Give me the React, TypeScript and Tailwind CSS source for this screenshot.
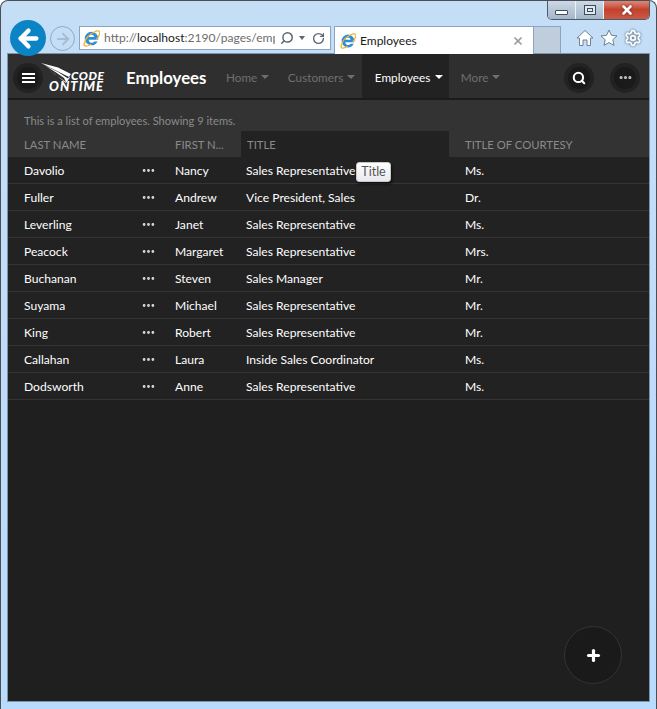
import { ArrowLeft, ArrowRight, Settings, RotateCw, Search, X, Plus, Ellipsis } from "lucide-react";

const font = { fontFamily: 'Lato, "Open Sans", sans-serif' };

const employees = [
  ["Davolio", "Nancy", "Sales Representative", "Ms."],
  ["Fuller", "Andrew", "Vice President, Sales", "Dr."],
  ["Leverling", "Janet", "Sales Representative", "Ms."],
  ["Peacock", "Margaret", "Sales Representative", "Mrs."],
  ["Buchanan", "Steven", "Sales Manager", "Mr."],
  ["Suyama", "Michael", "Sales Representative", "Mr."],
  ["King", "Robert", "Sales Representative", "Mr."],
  ["Callahan", "Laura", "Inside Sales Coordinator", "Ms."],
  ["Dodsworth", "Anne", "Sales Representative", "Ms."],
];

function IeLogo({ size }: { size: number }) {
  return (
    <svg width={size} height={size} viewBox="0 0 20 20" className="shrink-0">
      <path d="M10 2a8 8 0 0 0 0 16c3.400 0 6-1.800 7.200-4.600h-4a3.600 3.600 0 0 1-6.600-1.900h11.200c.1-.5.2-1 .2-1.500A8 8 0 0 0 10 2zM6.700 8.300a3.400 3.400 0 0 1 6.600 0z" fill="#2f8fd6" fillRule="evenodd" />
      <path d="M2 15C-.5 19.500 4 20 9 17M13 2.600c4-2.400 7.600-2.400 6.400 2.400-.6 2.400-2 4.400-3.400 6" fill="none" stroke="#f2b632" strokeWidth="1.500" strokeLinecap="round" />
      <path d="M1.500 16C2.500 11 6 6 13 2.600" fill="none" stroke="#f2b632" strokeWidth="1.500" strokeLinecap="round" />
    </svg>
  );
}

function Logo() {
  return (
    <svg width="64" height="30" viewBox="0 0 64 30" className="shrink-0">
      <path d="M0 0L17 4.500L30 11L27 15.500L17 9L4 2.500L15 9.500L23 15L25 19L14 11.500L8 6.500L20 16L25 20L29 14.500Z" fill="#fff" />
      <text x="30" y="17" fill="#fff" fontSize="12" fontWeight="900" fontStyle="italic" fontFamily="Lato, sans-serif" textLength="33">CODE</text>
      <text x="8" y="28" fill="#fff" fontSize="13" fontWeight="900" fontStyle="italic" fontFamily="Lato, sans-serif" textLength="54">ONTIME</text>
    </svg>
  );
}

function BrowserHome() {
  return (
    <svg width="18" height="18" viewBox="0 0 18 18" className="shrink-0">
      <path d="M9 1.500L17 9h-2.500v7.500H11V11H7v5.500H3.500V9H1z" fill="#fff" stroke="#6f8296" strokeWidth="1" strokeLinejoin="round" />
    </svg>
  );
}

function BrowserStar() {
  return (
    <svg width="18" height="18" viewBox="0 0 18 18" className="shrink-0">
      <path d="M9 1l2.400 5.300 5.600.6-4.200 3.800 1.200 5.700L9 13.500l-5 2.900 1.200-5.700L1 6.900l5.600-.6z" fill="#fff" stroke="#6f8296" strokeWidth="1" strokeLinejoin="round" />
    </svg>
  );
}

function NavItem({ label, active }: { label: string; active?: boolean }) {
  return (
    <div className={`flex h-full items-center pt-[4px] text-[11.750px] ${active ? "w-[87px] gap-[5px] bg-[#222222] pl-[13px] text-white" : "gap-[4px] pl-[12px] pr-[6.500px] text-[#6f6f6f]"}`}>
      {label}
      <span className={`mt-[-3px] h-0 w-0 border-x-[4px] border-t-[4px] border-x-transparent ${active ? "border-t-white" : "border-t-[#6f6f6f]"}`} />
    </div>
  );
}

function RoundButton({ children }: { children: React.ReactNode }) {
  return (
    <div className="flex h-[30px] w-[30px] items-center justify-center rounded-full bg-[#222222]">
      <div className="flex h-[22px] w-[22px] items-center justify-center rounded-full bg-[#1a1a1a]">{children}</div>
    </div>
  );
}

export default function App() {
  return (
    <div
      style={font}
      className="relative flex h-[709px] w-[657px] flex-col overflow-hidden rounded-t-[8px] border border-b-0 border-[#4a4f55] bg-gradient-to-b from-[#c4def6] to-[#b9dbfd] px-[7px]"
    >
      {/* Browser chrome */}
      <div className="relative h-[53px] shrink-0">
        <div className="absolute right-[-1px] top-[-1px] flex h-[20px] w-[103px] overflow-hidden rounded-b-[5px] border border-t-0 border-[#4d5a68]">
          <div className="flex w-[28px] items-center justify-center border-r border-[#eef3f8] bg-gradient-to-b from-[#cfdbe7] to-[#a3b6c9]">
            <div className="mt-[5px] h-[5px] w-[13px] rounded-[1px] border border-[#3d4d5e] bg-white" />
          </div>
          <div className="flex w-[28px] items-center justify-center border-r border-[#eef3f8] bg-gradient-to-b from-[#cfdbe7] to-[#a3b6c9]">
            <div className="flex h-[10px] w-[12px] items-center justify-center border border-[#3d4d5e] bg-[#dfe7ef]">
              <div className="h-[4px] w-[6px] border border-[#3d4d5e]" />
            </div>
          </div>
          <div className="flex flex-1 items-center justify-center bg-gradient-to-b from-[#dc9083] via-[#c4412d] to-[#c95a45]">
            <X size={14} strokeWidth={4.500} className="text-white drop-shadow-[0_0_1px_#5a1a10]" />
          </div>
        </div>

        <div className="flex items-start pt-[19px]">
          <div className="z-10 ml-[2px] flex h-[36px] w-[36px] shrink-0 items-center justify-center rounded-full bg-[#0a84c4]">
            <ArrowLeft size={27} strokeWidth={3.800} className="text-white" />
          </div>
          <div className="ml-[4px] mt-[6px] flex h-[25px] w-[25px] shrink-0 items-center justify-center rounded-full border border-[#8fa9c2]">
            <ArrowRight size={18} strokeWidth={2.500} className="text-[#a9bccf]" />
          </div>
          <div className="ml-[4px] mt-[6px] flex h-[24px] w-[252px] shrink-0 items-center border border-[#8ba5bf] bg-white pl-[3px] text-[12.100px] text-[#6d6d6d]">
            <IeLogo size={17} />
            <div className="ml-[4px] w-[171px] overflow-hidden whitespace-nowrap">
              http://<span className="text-[#1a1a1a]">localhost</span>:2190/pages/employees
            </div>
            <Search size={14} strokeWidth={2.500} className="ml-[5px] -scale-x-100 text-[#5c6670]" />
            <span className="ml-[5px] h-0 w-0 border-x-[3px] border-t-[4px] border-x-transparent border-t-[#5c6670]" />
            <RotateCw size={13} strokeWidth={2.500} className="ml-[7px] text-[#5c6670]" />
          </div>
          <div className="ml-[3px] mt-[6px] flex h-[28px] w-[200px] shrink-0 items-center border-x border-t border-[#8ba5bf] bg-white pl-[5px] pr-[9px] text-[12px] text-[#1a1a1a]">
            <IeLogo size={16} />
            <span className="ml-[4px] flex-1">Employees</span>
            <X size={12} strokeWidth={3.500} className="text-[#9a9a9a]" />
          </div>
          <div className="mt-[6px] h-[27px] w-[27px] shrink-0 border-r border-t border-[#8ba5bf] bg-[#bfcddc]" />
          <div className="ml-[15px] mt-[9px] flex shrink-0 items-center gap-[6px] text-white">
            <BrowserHome />
            <BrowserStar />
            <Settings size={18} strokeWidth={2.500} className="text-[#f6f9fc] drop-shadow-[0_0_1px_#44566a]" />
          </div>
        </div>
      </div>

      {/* Page */}
      <div className="flex h-[647px] w-[641px] shrink-0 flex-col bg-[#1f1f1f] outline outline-1 outline-[#7c93a8]">
        <div className="flex h-[46px] shrink-0 items-center border-b-2 border-[#1b1b1b] bg-[#2f2f2f]">
          <div className="ml-[5px] mt-[3px]">
            <RoundButton>
              <div className="flex w-[13px] flex-col gap-[2px]">
                <div className="h-[2px] bg-white" />
                <div className="h-[2px] bg-white" />
                <div className="h-[2px] bg-white" />
              </div>
            </RoundButton>
          </div>
          <div className="ml-[-2px] mt-[4px]">
            <Logo />
          </div>
          <div className="ml-[21px] mt-[3px] w-[87px] shrink-0 text-[16.800px] font-bold text-white">Employees</div>
          <div className="ml-[1px] flex h-full">
            <NavItem label="Home" />
            <NavItem label="Customers" />
            <NavItem label="Employees" active />
            <NavItem label="More" />
          </div>
          <div className="ml-auto mr-[9px] mt-[3px] flex gap-[16px]">
            <RoundButton>
              <Search size={14} strokeWidth={3.500} className="text-white" />
            </RoundButton>
            <RoundButton>
              <Ellipsis size={15} strokeWidth={3} className="text-[#cccccc]" />
            </RoundButton>
          </div>
        </div>

        <div className="shrink-0 bg-[#333333]">
          <div className="pl-[16px] pt-[12px] text-[11.100px] leading-[17px] text-[#8a8a8a]">This is a list of employees. Showing 9 items.</div>
          <div className="mt-[2px] grid h-[26px] grid-cols-[126px_28px_79px_208px_200px] text-[11.300px] text-[#8a8a8a]">
            <div className="flex items-center pl-[16px] pt-[2px]">LAST NAME</div>
            <div />
            <div className="flex items-center pl-[13px] pt-[2px]">FIRST N...</div>
            <div className="flex items-center bg-[#222222] pl-[6px] pt-[2px]">TITLE</div>
            <div className="flex items-center pl-[16px] pt-[2px]">TITLE OF COURTESY</div>
          </div>
        </div>

        <div className="relative">
          {employees.map((e) => (
            <div key={e[0]} className="grid h-[27px] grid-cols-[126px_28px_79px_208px_200px] items-center border-b border-[#353535] bg-[#222222] text-[12.100px] text-white">
              <div className="pl-[16px] pt-[3px]">{e[0]}</div>
              <div className="flex justify-center">
                <Ellipsis size={15} strokeWidth={2.500} className="text-[#dddddd]" />
              </div>
              <div className="pl-[13px] pt-[3px]">{e[1]}</div>
              <div className="whitespace-nowrap pl-[5px] pt-[3px]">{e[2]}</div>
              <div className="pl-[16px] pt-[3px]">{e[3]}</div>
            </div>
          ))}
          <div className="absolute left-[348px] top-[5px] flex h-[20px] w-[35px] items-center justify-center rounded-[3px] border border-[#c8c8c8] bg-gradient-to-b from-white to-[#e8e8f0] text-[12.500px] text-[#555555] shadow-[1px_2px_3px_rgba(0,0,0,0.6)]">
            Title
          </div>
        </div>

        <div className="flex flex-1 items-end justify-end pb-[17px] pr-[27px]">
          <div className="flex h-[58px] w-[58px] items-center justify-center rounded-full border border-[#333333] bg-[#1a1a1a]">
            <Plus size={17} strokeWidth={4.500} className="text-white" />
          </div>
        </div>
      </div>
    </div>
  );
}
